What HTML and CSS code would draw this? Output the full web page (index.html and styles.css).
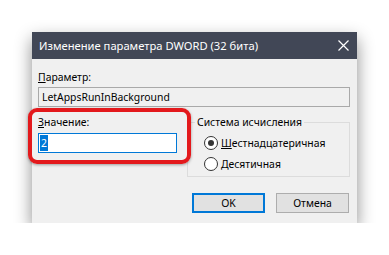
FILE: index.html
```html
<!DOCTYPE html>
<html>
<head>
    <title>Изменение параметра DWORD</title>
    <link rel="stylesheet" href="styles.css">
</head>
<body>
    <div class="dialog">
        <div class="titlebar">
            <span class="title">Изменение параметра DWORD (32 бита)</span>
            <svg class="close" width="11" height="11" viewBox="0 0 11 11">
                <path d="M0.5 0.5 L10.5 10.5 M10.5 0.5 L0.5 10.5" stroke="#fff" stroke-width="1.2" fill="none"/>
            </svg>
        </div>

        <div class="content">
            <div class="label"><u>П</u>араметр:</div>
            <div class="field readonly">LetAppsRunInBackground</div>

            <div class="row">
                <div class="value-col">
                    <div class="label"><u>З</u>начение:</div>
                    <div class="field active"><span class="selected">2</span></div>
                    <div class="highlight"></div>
                </div>

                <fieldset class="group">
                    <legend>Система исчисления</legend>
                    <div class="radio"><span class="circle checked"></span><span><u>Ш</u>естнадцатеричная</span></div>
                    <div class="radio"><span class="circle"></span><span><u>Д</u>есятичная</span></div>
                </fieldset>
            </div>

            <div class="buttons">
                <div class="btn default">OK</div>
                <div class="btn">Отмена</div>
            </div>
        </div>
    </div>
</body>
</html>
```

FILE: styles.css
```css
body {
    margin: 0;
    background-color: #fff;
    font-family: "Noto Sans", "Open Sans", sans-serif;
    font-size: 10.4px;
    color: #000;
}
.dialog {
    width: 325px;
    height: 191px;
    margin: 32px 0 0 32px;
    background-color: #f0f0f0;
    box-shadow: 0 7px 16px rgba(0,0,0,0.45);
}
.titlebar {
    height: 27px;
    background-color: #414756;
    color: #fff;
    display: flex;
    align-items: center;
    justify-content: space-between;
    padding: 0 8px 0 7px;
    font-size: 11.2px;
}
.content {
    padding: 10px 7px 0 6px;
}
.label {
    height: 16px;
    line-height: 16px;
}
.field {
    height: 20px;
    box-sizing: border-box;
    line-height: 18px;
    padding: 0 3px;
    margin-top: 2px;
    border: 1px solid #a9a9a9;
}
.field.readonly {
    background-color: #f0f0f0;
}
.field.active {
    background-color: #fff;
    border-color: #0078d7;
    padding: 1px 1px;
    line-height: 16px;
    margin-top: 3px;
}
.selected {
    display: inline-block;
    background-color: #0078d7;
    color: #fff;
    padding: 0 1px;
}
.row {
    display: grid;
    grid-template-columns: 139px 163px;
    column-gap: 10px;
    margin-top: 7px;
}
.value-col {
    position: relative;
    align-self: start;
}
.highlight {
    position: absolute;
    left: -10px;
    top: -6px;
    right: -14px;
    bottom: -11px;
    border: 4px solid #e3191c;
    border-radius: 9px;
    box-shadow: 0 1px 3px rgba(0,0,0,0.35);
}
.group {
    margin: 0;
    padding: 2px 0 0 0;
    border: 1px solid #dcdcdc;
    height: 63px;
    box-sizing: border-box;
}
.group legend {
    padding: 0 2px;
    margin-left: 7px;
    line-height: 16px;
}
.radio {
    display: flex;
    align-items: center;
    gap: 3px;
    height: 21px;
    padding-left: 16px;
}
.circle {
    width: 12px;
    height: 12px;
    border: 1px solid #333;
    border-radius: 50%;
    background-color: #fff;
    display: flex;
    align-items: center;
    justify-content: center;
}
.circle.checked::after {
    content: "";
    width: 6px;
    height: 6px;
    border-radius: 50%;
    background-color: #333;
}
.buttons {
    display: flex;
    justify-content: flex-end;
    gap: 11px;
    margin-top: 16px;
    padding-right: 1px;
}
.btn {
    width: 73px;
    height: 20px;
    box-sizing: border-box;
    border: 1px solid #adadad;
    background-color: #e1e1e1;
    text-align: center;
    line-height: 18px;
}
.btn.default {
    border: 2px solid #0078d7;
    line-height: 16px;
}
```
